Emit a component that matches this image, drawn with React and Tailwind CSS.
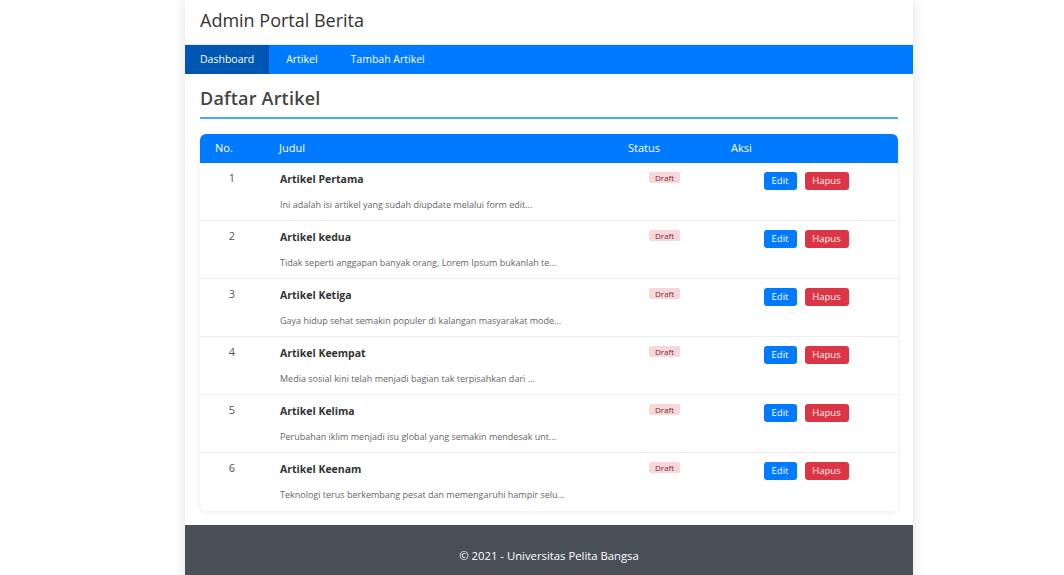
import React from 'react';

const artikel = [
    { no: 1, judul: 'Artikel Pertama', isi: 'Ini adalah isi artikel yang sudah diupdate melalui form edit...' },
    { no: 2, judul: 'Artikel kedua', isi: 'Tidak seperti anggapan banyak orang, Lorem Ipsum bukanlah te...' },
    { no: 3, judul: 'Artikel Ketiga', isi: 'Gaya hidup sehat semakin populer di kalangan masyarakat mode...' },
    { no: 4, judul: 'Artikel Keempat', isi: 'Media sosial kini telah menjadi bagian tak terpisahkan dari ...' },
    { no: 5, judul: 'Artikel Kelima', isi: 'Perubahan iklim menjadi isu global yang semakin mendesak unt...' },
    { no: 6, judul: 'Artikel Keenam', isi: 'Teknologi terus berkembang pesat dan memengaruhi hampir selu...' },
];

const App = () => {
    return (
        <div className="min-h-[575px] bg-white font-['Open_Sans',sans-serif]">
            <div className="ml-[185px] w-[728px] bg-white shadow-[0_0_12px_rgba(0,0,0,0.12)]">
                {/* Header */}
                <header className="h-[45px] px-[15px] flex items-center border-b border-[#e5e5e5]">
                    <h1 className="text-[18px] text-[#333] leading-none pb-[5px]">Admin Portal Berita</h1>
                </header>

                {/* Nav */}
                <nav className="h-[29px] bg-[#007bff] flex text-[10.5px] text-white">
                    <a className="px-[15px] flex items-center bg-[#0056b3]">Dashboard</a>
                    <a className="px-[17px] flex items-center">Artikel</a>
                    <a className="px-[16px] flex items-center">Tambah Artikel</a>
                </nav>

                {/* Content */}
                <main className="px-[15px] pt-[12px] pb-[14px]">
                    <h2 className="text-[18px] font-semibold text-[#444] leading-[24px] tracking-[0.2px]">Daftar Artikel</h2>
                    <div className="mt-[7px] h-[2px] bg-[#4da3ff]"></div>

                    <div className="mt-[15px] rounded-[6px] bg-white shadow-[0_1px_6px_rgba(0,0,0,0.08)] overflow-hidden">
                        <div className="h-[29px] bg-[#007bff] flex items-center text-[11px] text-white">
                            <div className="w-[64px] pl-[15px]">No.</div>
                            <div className="w-[349px] pl-[15px]">Judul</div>
                            <div className="w-[103px] pl-[15px]">Status</div>
                            <div className="flex-1 pl-[15px]">Aksi</div>
                        </div>
                        {artikel.map((item, i) => (
                            <div
                                key={item.no}
                                className={`flex h-[58px] ${i < artikel.length - 1 ? 'border-b border-[#efefef]' : ''}`}
                            >
                                <div className="w-[64px] pt-[8px] text-center text-[11px] text-[#555] leading-[14px]">{item.no}</div>
                                <div className="w-[349px] pl-[16px] pt-[9px]">
                                    <div className="text-[10.5px] font-bold text-[#333] leading-[14px]">{item.judul}</div>
                                    <div className="mt-[13px] text-[9px] text-[#666] leading-[12px]">{item.isi}</div>
                                </div>
                                <div className="w-[103px] pt-[9px] flex justify-center items-start">
                                    <span className="h-[11px] px-[6px] rounded-[2px] bg-[#f8d7da] text-[#7a2a33] text-[8px] leading-[11px]">Draft</span>
                                </div>
                                <div className="flex-1 pt-[9px] pr-[2px] flex justify-center items-start gap-[8px]">
                                    <button className="h-[18px] w-[33px] rounded-[3px] bg-[#007bff] text-white text-[9.5px] leading-[18px]">Edit</button>
                                    <button className="h-[18px] w-[44px] rounded-[3px] bg-[#dc3545] text-white text-[9.5px] leading-[18px]">Hapus</button>
                                </div>
                            </div>
                        ))}
                    </div>
                </main>

                {/* Footer */}
                <footer className="bg-[#495057] py-[22px] text-center text-[11.3px] text-white leading-[18px]">
                    © 2021 - Universitas Pelita Bangsa
                </footer>
            </div>
        </div>
    );
};

export default App;
